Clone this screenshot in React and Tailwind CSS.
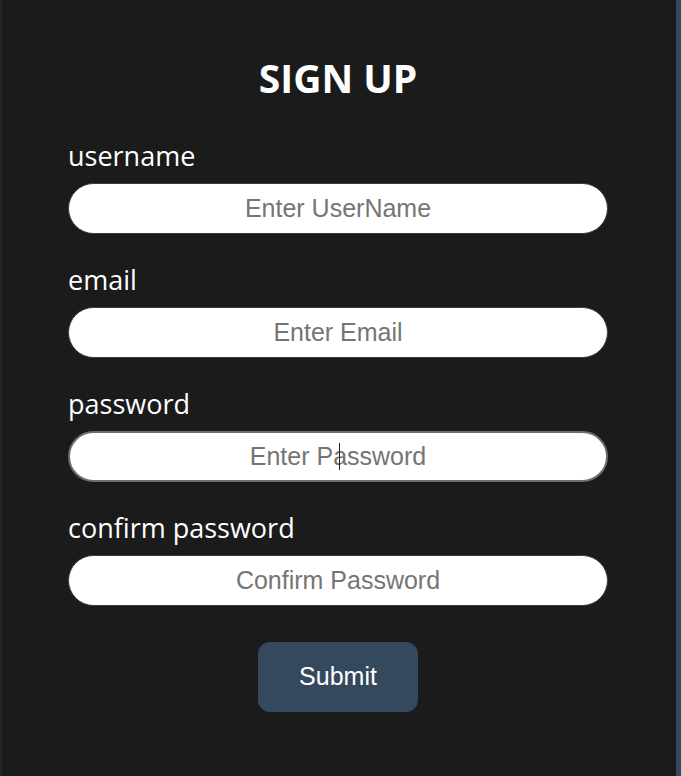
import React from "react";

const fields = [
  { label: "username", ph: "Enter UserName" },
  { label: "email", ph: "Enter Email" },
  { label: "password", ph: "Enter Password", focus: true },
  { label: "confirm password", ph: "Confirm Password" },
];

export default function App() {
  return (
    <div className="w-[681px] h-[776px] bg-[#1b1b1b] border-l-2 border-l-[#1d2530] border-r-[5px] border-r-[#34495e] overflow-hidden">
      <div className="pl-[66px] w-[606px]">
        <h1
          className="pt-[54px] text-center text-[39px] leading-[48px] font-bold text-white"
          style={{ fontFamily: '"Open Sans", sans-serif' }}
        >
          SIGN UP
        </h1>
        <div className="flex flex-col mt-[38px] gap-[30px]">
          {fields.map((f) => (
            <div key={f.label} className="flex flex-col">
              <label
                className="text-[27px] leading-[32px] text-white"
                style={{ fontFamily: '"Open Sans", sans-serif' }}
              >
                {f.label}
              </label>
              <div className="relative mt-[11px]">
                <input
                  placeholder={f.ph}
                  className={
                    "w-[540px] h-[51px] rounded-full bg-white text-center text-[25px] outline-none placeholder:text-[#757575] " +
                    (f.focus
                      ? "border-2 border-[#6e6e6e]"
                      : "border border-[#3a3a3a]")
                  }
                  style={{ fontFamily: '"Liberation Sans", Arial, sans-serif' }}
                />
                {f.focus && (
                  <div className="absolute left-[271px] top-[12px] w-[1px] h-[27px] bg-[#222]" />
                )}
              </div>
            </div>
          ))}
        </div>
        <div className="flex justify-center mt-[36px]">
          <button
            className="w-[160px] h-[70px] rounded-[12px] bg-[#34495e] text-white text-[25px]"
            style={{ fontFamily: '"Liberation Sans", Arial, sans-serif' }}
          >
            Submit
          </button>
        </div>
      </div>
    </div>
  );
}
